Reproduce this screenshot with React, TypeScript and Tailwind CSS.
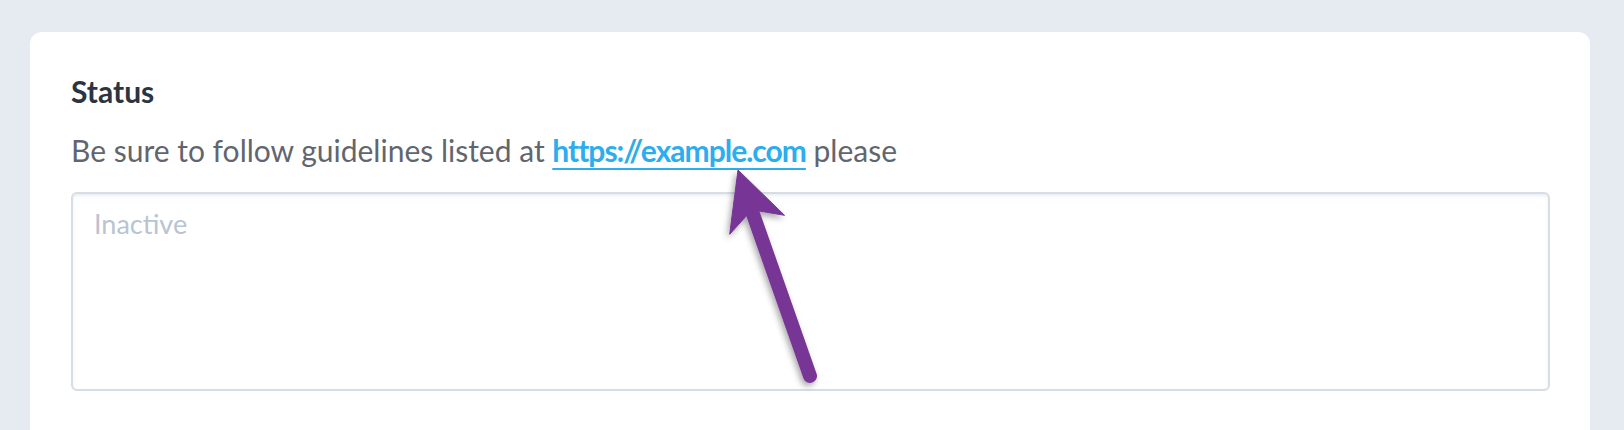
import React from "react";

export default function App() {
  return (
    <div
      className="relative h-[430px] w-[1624px] overflow-hidden bg-[#e6ebf2]"
      style={{ fontFamily: "Lato, 'Noto Sans', sans-serif" }}
    >
      <div className="ml-[30px] mt-[32px] h-[460px] w-[1560px] rounded-[12px] bg-white px-[41px] pt-[41px]">
        <div className="text-[30px] font-bold leading-[36px] text-[#2c3440]">Status</div>
        <div className="mt-[23px] text-[30px] leading-[36px] text-[#61666e]">
          Be sure to follow guidelines listed at{" "}
          <a
            href="#"
            className="font-bold tracking-[-1px] text-[#2daded] underline decoration-2 underline-offset-[6px]"
          >
            https://example.com
          </a>{" "}
          please
        </div>
        <div className="mt-[24px] h-[199px] w-[1479px] rounded-[6px] border-2 border-[#d6dde6] px-[21px] pt-[12px] shadow-[inset_0_2px_3px_rgba(180,190,205,0.25)]">
          <div className="text-[27px] leading-[36px] text-[#b9c4d2]">Inactive</div>
        </div>
      </div>
      <svg
        className="pointer-events-none absolute left-0 top-0"
        width="1624"
        height="430"
        viewBox="0 0 1624 430"
      >
        <defs>
          <filter id="sh" x="-50%" y="-50%" width="200%" height="200%">
            <feDropShadow dx="-2" dy="3" stdDeviation="3" floodColor="#000" floodOpacity="0.35" />
          </filter>
        </defs>
        <g filter="url(#sh)" fill="#773595" stroke="#773595">
          <line x1="753" y1="214" x2="810" y2="376" strokeWidth="14" strokeLinecap="round" />
          <polygon
            points="738,170 784.5,215.3 759.7,211.1 746.5,215.7 729.7,234.3"
            strokeWidth="1"
            strokeLinejoin="miter"
          />
        </g>
      </svg>
    </div>
  );
}
